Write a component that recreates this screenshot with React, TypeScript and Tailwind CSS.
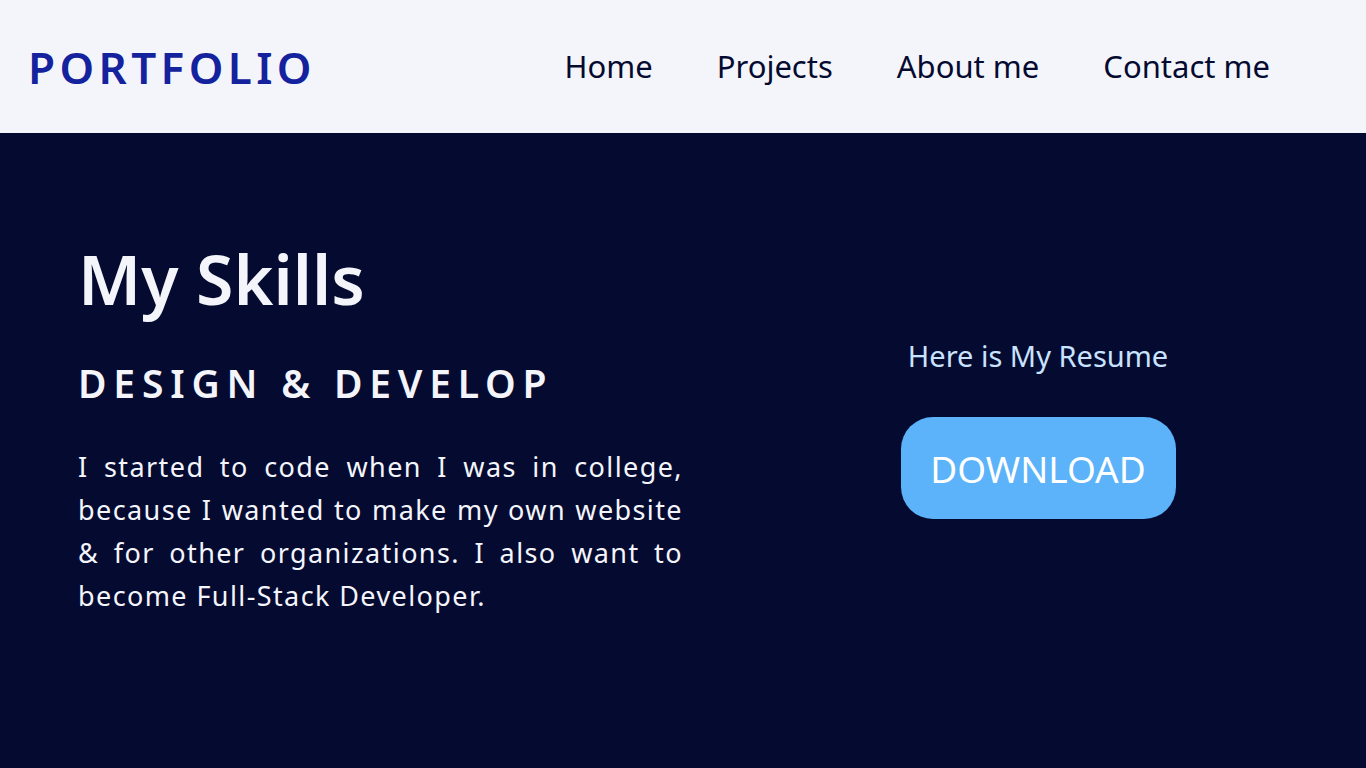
import * as React from 'react';

const navItems = ['Home', 'Projects', 'About me', 'Contact me'];

function Header() {
	return (
		<header className="flex h-[133px] items-center justify-between bg-[#f4f5fb] pl-[28px] pr-[96px]">
			<div className="text-[44px] font-semibold leading-none tracking-[4.4px] text-[#14229e]">
				PORTFOLIO
			</div>
			<nav className="flex items-center gap-[64px]">
				{navItems.map((item) => (
					<a
						key={item}
						href="#"
						className="text-[31px] leading-none text-[#040a30]"
					>
						{item}
					</a>
				))}
			</nav>
		</header>
	);
}

export default function App() {
	return (
		<div className="min-h-[768px] bg-[#040a30] font-['Noto_Sans',sans-serif]">
			<Header />
			<main className="flex h-[635px] bg-[#040a30]">
				{/* Skills */}
				<section className="ml-[78px] w-[605px] pt-[112px]">
					<h1 className="text-[68px] font-semibold leading-none text-[#f4f5fb]">
						My Skills
					</h1>
					<h2 className="mt-[50px] text-[39px] font-semibold leading-none tracking-[6.8px] text-[#f4f5fb]">
						DESIGN &amp; DEVELOP
					</h2>
					<p className="mt-[43px] text-justify text-[27px] leading-[43px] tracking-[1.4px] text-[#f4f5fb]">
						I started to code when I was in college, because I wanted to make my
						own website &amp; for other organizations. I also want to become
						Full-Stack Developer.
					</p>
				</section>

				{/* Resume */}
				<section className="ml-[155px] flex w-[400px] flex-col items-center pt-[208px]">
					<p className="text-[29px] leading-none text-[#c9e3ff]">
						Here is My Resume
					</p>
					<button className="mt-[47px] flex h-[102px] w-[275px] items-center justify-center rounded-[32px] bg-[#5cb3f9] text-[37px] leading-none text-white">
						DOWNLOAD
					</button>
				</section>
			</main>
		</div>
	);
}
